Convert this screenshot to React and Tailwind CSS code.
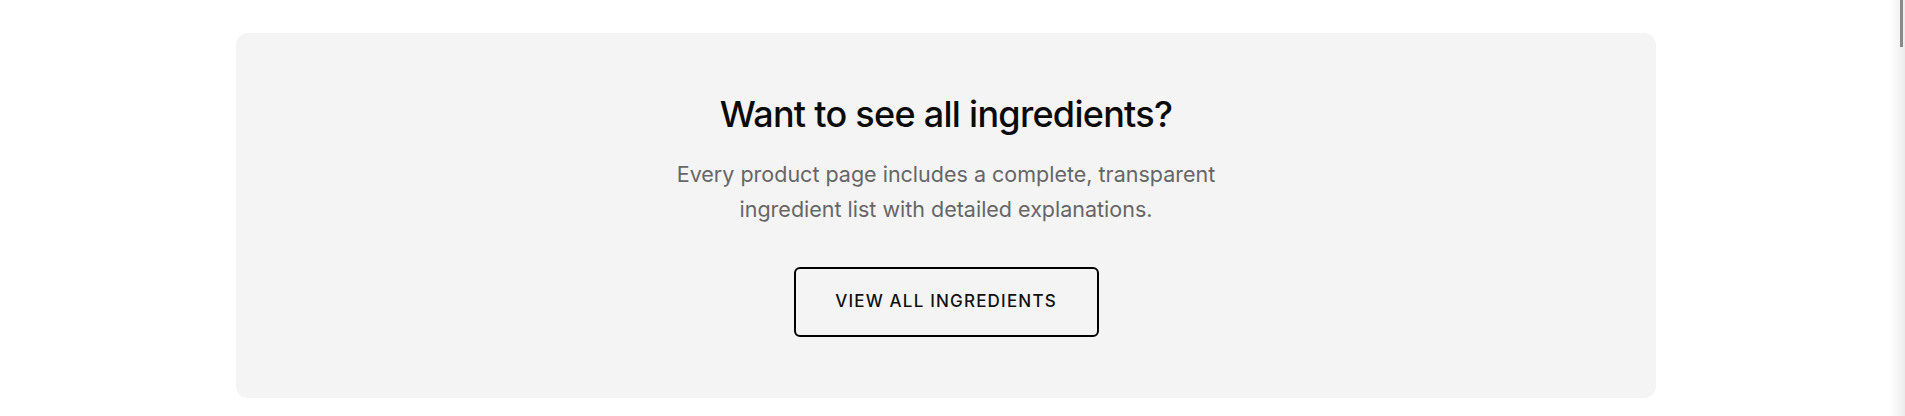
export default function App() {
  return (
    <div className="flex h-[416px] w-full bg-white" style={{ fontFamily: "Inter, 'Noto Sans', sans-serif" }}>
      <main className="flex-1 pt-[33px] pl-[2px]">
        <section className="mx-auto flex max-w-[1420px] flex-col items-center rounded-xl bg-[#f4f4f4] px-16 pt-[61px] pb-[61px] text-center">
          <h2 className="text-[36px] font-medium leading-[40px] tracking-[-0.02em] text-[#0a0a0a]">
            Want to see all ingredients?
          </h2>
          <p className="mt-[23px] max-w-[600px] text-[21.5px] leading-[35px] text-[#666]">
            Every product page includes a complete, transparent ingredient list with detailed explanations.
          </p>
          <button className="mt-[40px] flex h-[70px] w-[305px] items-center justify-center rounded-md border-2 border-black text-[17px] font-medium tracking-[0.07em] text-[#111]">
            VIEW ALL INGREDIENTS
          </button>
        </section>
      </main>
      <div className="h-full w-[15px] bg-gradient-to-r from-white to-[#ececec]">
        <div className="ml-[10px] h-[47px] w-[3px] bg-[#8a8a8a]" />
      </div>
    </div>
  );
}
